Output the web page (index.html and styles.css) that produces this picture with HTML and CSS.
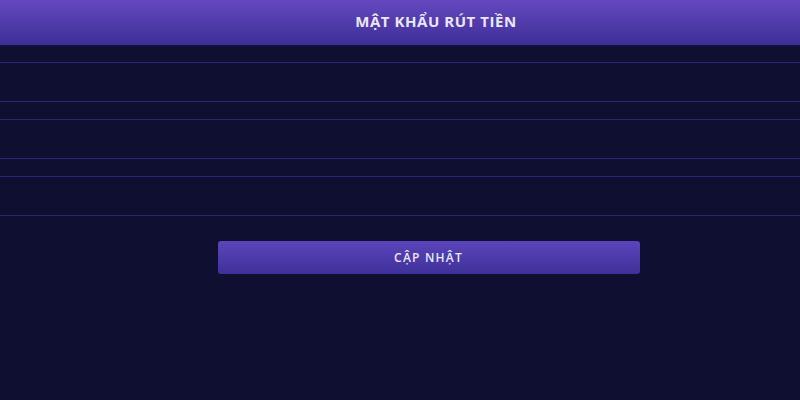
FILE: index.html
```html
<!DOCTYPE html>
<html lang="vi">
<head>
<meta charset="utf-8">
<link rel="stylesheet" href="styles.css">
</head>
<body>
<header class="topbar"><h1 class="title">MẬT KHẨU RÚT TIỀN</h1></header>
<main class="form">
  <div class="field"></div>
  <div class="field"></div>
  <div class="field"></div>
  <div class="actions"><button class="btn">CẬP NHẬT</button></div>
</main>
</body>
</html>
```
FILE: styles.css
```css
html, body { margin: 0; padding: 0; }
body {
  width: 800px; height: 400px; overflow: hidden;
  background: #0f0f31;
  font-family: "Open Sans", "DejaVu Sans", sans-serif;
}
.topbar {
  height: 45px;
  background: linear-gradient(#6548c0, #3d2f97);
  border-bottom: 1px solid #17123f;
  display: flex; align-items: center; justify-content: center;
  padding-left: 72px;
  padding-bottom: 0;
  box-sizing: content-box;
}
.title {
  margin: 0 0 3px; font-size: 15px; font-weight: 700; color: #ebe7f8;
  letter-spacing: 0.55px;
}
.form { display: flex; flex-direction: column; padding-top: 16px; }
.field {
  height: 38px;
  border-top: 1px solid #2c2574;
  border-bottom: 1px solid #2c2574;
  background: #0f0f31;
  margin-bottom: 17px;
}
.actions { display: flex; justify-content: center; padding-top: 8px; padding-left: 57px; }
.btn {
  width: 422px; height: 33px;
  border: none; border-radius: 3px;
  background: linear-gradient(#5b45bb, #3f3099);
  color: #ece8f8; font-family: inherit;
  font-size: 12px; font-weight: 600; letter-spacing: 1.2px;
}
```
